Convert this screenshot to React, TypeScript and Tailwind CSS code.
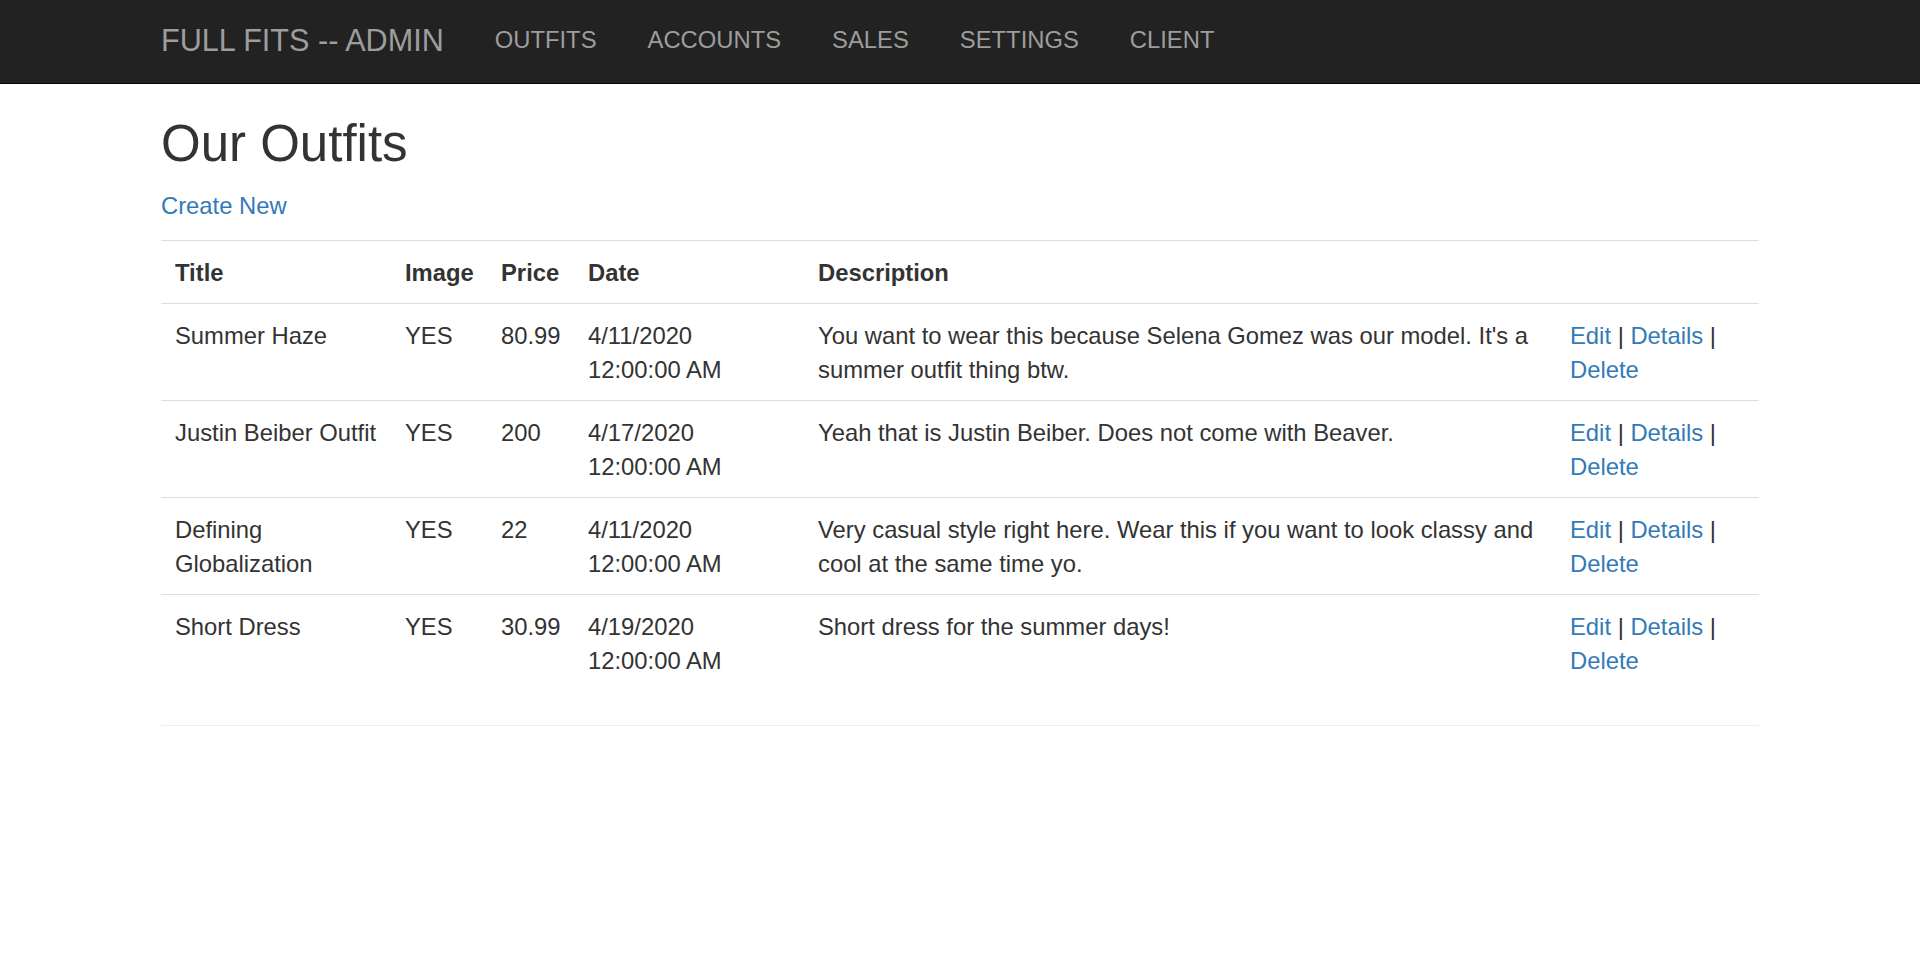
const navLinks = ["OUTFITS", "ACCOUNTS", "SALES", "SETTINGS", "CLIENT"];

const outfits = [
  {
    title: "Summer Haze",
    image: "YES",
    price: "80.99",
    date: "4/11/2020",
    description:
      "You want to wear this because Selena Gomez was our model. It's a summer outfit thing btw.",
  },
  {
    title: "Justin Beiber Outfit",
    image: "YES",
    price: "200",
    date: "4/17/2020",
    description: "Yeah that is Justin Beiber. Does not come with Beaver.",
  },
  {
    title: "Defining Globalization",
    image: "YES",
    price: "22",
    date: "4/11/2020",
    description:
      "Very casual style right here. Wear this if you want to look classy and cool at the same time yo.",
  },
  {
    title: "Short Dress",
    image: "YES",
    price: "30.99",
    date: "4/19/2020",
    description: "Short dress for the summer days!",
  },
];

export default function App() {
  return (
    <div className="min-h-[963px] bg-white font-['Liberation_Sans',Arial,sans-serif] text-[#333]">
      {/* Navbar */}
      <nav className="h-[84px] bg-[#222] border-b border-[#080808]">
        <div className="w-[1598px] mx-auto flex pt-[23px]">
          <a className="text-[30.6px] leading-[34px] text-[#9d9d9d] pr-[25.5px] whitespace-nowrap">
            FULL FITS -- ADMIN
          </a>
          <ul className="flex">
            {navLinks.map((link) => (
              <li key={link}>
                <a className="block px-[25.5px] text-[23.8px] leading-[34px] text-[#9d9d9d]">
                  {link}
                </a>
              </li>
            ))}
          </ul>
        </div>
      </nav>

      {/* Body */}
      <div className="w-[1598px] mx-auto">
        <h2 className="mt-[32px] mb-[17px] text-[51px] leading-[56px] font-normal">Our Outfits</h2>
        <p className="mb-[17px] text-[23.8px] leading-[34px]">
          <a className="text-[#337ab7]">Create New</a>
        </p>

        <table className="w-full table-fixed border-collapse text-[23.8px] leading-[34px]">
          <colgroup>
            <col className="w-[230px]" />
            <col className="w-[96px]" />
            <col className="w-[87px]" />
            <col className="w-[230px]" />
            <col className="w-[752px]" />
            <col className="w-[203px]" />
          </colgroup>
          <tbody>
            <tr className="border-t border-[#ddd]">
              <th className="px-[14px] pt-[15px] pb-[13px] text-left align-top font-bold">Title</th>
              <th className="px-[14px] pt-[15px] pb-[13px] text-left align-top font-bold">Image</th>
              <th className="px-[14px] pt-[15px] pb-[13px] text-left align-top font-bold">Price</th>
              <th className="px-[14px] pt-[15px] pb-[13px] text-left align-top font-bold">Date</th>
              <th className="px-[14px] pt-[15px] pb-[13px] text-left align-top font-bold">Description</th>
              <th className="px-[14px] pt-[15px] pb-[13px]"></th>
            </tr>
            {outfits.map((o) => (
              <tr key={o.title} className="border-t border-[#ddd]">
                <td className="px-[14px] pt-[15px] pb-[13px] align-top">{o.title}</td>
                <td className="px-[14px] pt-[15px] pb-[13px] align-top">{o.image}</td>
                <td className="px-[14px] pt-[15px] pb-[13px] align-top">{o.price}</td>
                <td className="px-[14px] pt-[15px] pb-[13px] align-top">
                  {o.date}
                  <br />
                  12:00:00 AM
                </td>
                <td className="px-[14px] pt-[15px] pb-[13px] align-top">{o.description}</td>
                <td className="px-[14px] pt-[15px] pb-[13px] align-top">
                  <a className="text-[#337ab7]">Edit</a> | <a className="text-[#337ab7]">Details</a> |{" "}
                  <a className="text-[#337ab7]">Delete</a>
                </td>
              </tr>
            ))}
          </tbody>
        </table>

        <hr className="mt-[34px] border-t border-[#eee]" />
      </div>
    </div>
  );
}
